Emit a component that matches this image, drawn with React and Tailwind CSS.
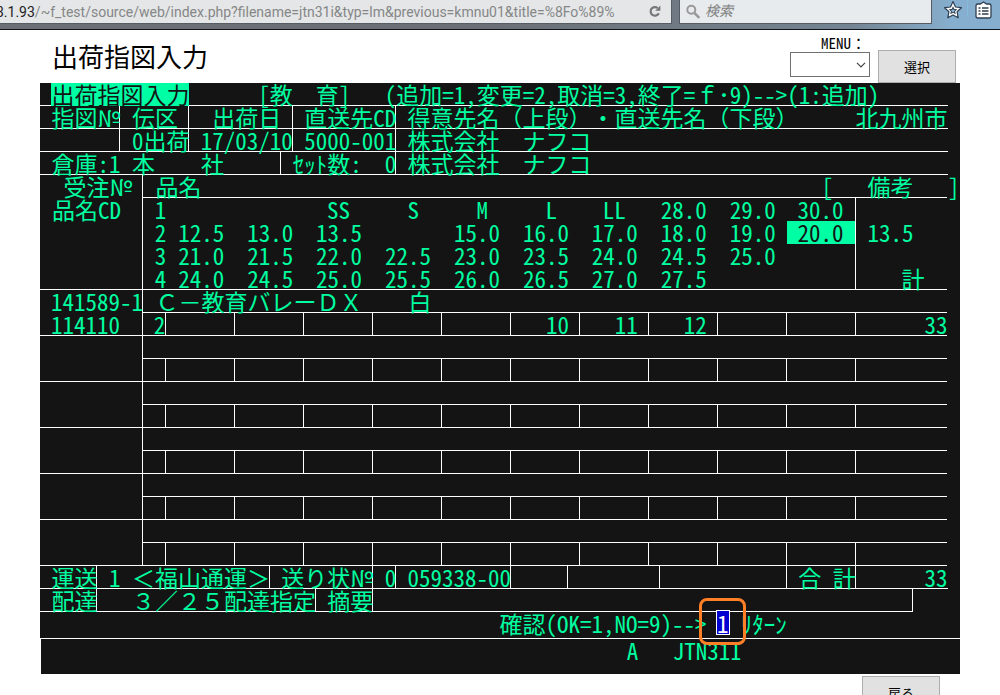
const SIZE_COLUMNS = 10;

const sizeRows = [
  { no: '1', sizes: ['', '', 'SS', 'S', 'M', 'L', 'LL', '28.0', '29.0', '30.0'], note: '' },
  { no: '2', sizes: ['12.5', '13.0', '13.5', '', '15.0', '16.0', '17.0', '18.0', '19.0', '20.0'], note: '13.5', selected: 9 },
  { no: '3', sizes: ['21.0', '21.5', '22.0', '22.5', '23.0', '23.5', '24.0', '24.5', '25.0', ''], note: '' },
  { no: '4', sizes: ['24.0', '24.5', '25.0', '25.5', '26.0', '26.5', '27.0', '27.5', '', ''], note: '計', noteEnd: true },
];

const blankLine = { order: '', code: '', name: '', row: '', qty: ['', '', '', '', '', '', '', '', '', ''], total: '' };

const orderLines = [
  {
    order: '141589-1',
    code: '114110',
    name: 'Ｃ－教育バレーＤＸ　　白',
    row: '2',
    qty: ['', '', '', '', '', '10', '11', '12', '', ''],
    total: '33',
  },
  blankLine,
  blankLine,
  blankLine,
  blankLine,
  blankLine,
];

function Row({ children, lined = true }) {
  return (
    <div className="grid h-[23px] grid-cols-[repeat(80,minmax(0,1fr))]">
      {lined && <div className="col-start-1 col-end-80 row-start-1 border-b border-white" />}
      {children}
    </div>
  );
}

function Cell({ className, children }) {
  return <div className={`row-start-1 whitespace-pre ${className}`}>{children}</div>;
}

function BrowserBar() {
  return (
    <header className="flex h-[30px] shrink-0 items-start border-b border-[#10151b] bg-linear-to-r from-[#6c7076] from-50% via-[#748492] via-85% to-[#86aece] to-95% font-['Roboto','Noto_Sans_CJK_JP',sans-serif]">
      <div className="flex h-6 min-w-0 flex-1 items-center justify-between overflow-hidden border-r border-b border-[#565c63] bg-[#e4e6e8]">
        <span className="-ml-1 text-[14px] leading-6 whitespace-nowrap text-[#868686]">
          <span className="text-[#222]">3.1.93</span>/~f_test/source/web/index.php?filename=jtn31i&amp;typ=lm&amp;previous=kmnu01&amp;title=%8Fo%89%
        </span>
        <button aria-label="再読み込み" className="mr-[10px] shrink-0">
          <svg width="12" height="13" viewBox="0 0 12 13" className="block">
            <path d="M9.8 8.2A4.3 4.3 0 1 1 8.6 3" fill="none" stroke="#777" strokeWidth="2.2" />
            <path d="M11.4 0.6v5.2H6.2z" fill="#777" />
          </svg>
        </button>
      </div>
      <div className="ml-[7px] flex h-6 w-[253px] items-center gap-1 border-r border-b border-l border-[#565c63] bg-[#e7ebee] pl-[5px]">
        <svg width="16" height="16" viewBox="0 0 16 16" className="shrink-0">
          <circle cx="6.3" cy="5.8" r="4" fill="none" stroke="#999" strokeWidth="2" />
          <path d="M9.3 8.8l5 5" stroke="#999" strokeWidth="2.6" />
        </svg>
        <input
          aria-label="検索"
          placeholder="検索"
          className="h-5 w-full min-w-0 bg-transparent text-[14px] italic outline-none placeholder:text-[#808080]"
        />
      </div>
      <button aria-label="ブックマーク" className="ml-3">
        <svg width="18" height="20" viewBox="0 0 18 20" className="block">
          <path d="M9 1.600l2.500 5.400 5.900.7-4.300 4.100 1.100 6L9 14.900l-5.200 2.900 1.100-6L.6 7.700 6.500 7z" fill="#fff" stroke="#2e3f52" strokeWidth="1.200" strokeLinejoin="round" />
          <path d="M9 6.200l1.300 2.700 3 .4-2.200 2 .6 3L9 12.800l-2.700 1.500.6-3-2.200-2 3-.4z" fill="#2e3f52" />
          <path d="M9 8.400l.7 1.500 1.500.2-1.100 1 .3 1.500L9 11.800l-1.400.8.3-1.500-1.100-1 1.500-.2z" fill="#8fb4d2" />
        </svg>
      </button>
      <span className="ml-[5px] h-4 w-px bg-[#84bbdc]" />
      <button aria-label="リスト" className="mr-2 ml-[7px]">
        <svg width="17" height="20" viewBox="0 0 17 20" className="block">
          <path d="M5.500 4L8.500 2l3 2h2.700q1.800 0 1.800 1.800v10.400q0 1.800-1.800 1.800H2.800Q1 18 1 16.200V5.800Q1 4 2.800 4z" fill="#fff" stroke="#2e3f52" strokeWidth="1.300" />
          <path d="M3.500 8h2M7 8h6.500M3.500 11h2M7 11h6.500M3.500 14h2M7 14h6.500" stroke="#2e3f52" strokeWidth="1.600" />
        </svg>
      </button>
    </header>
  );
}

function PageHeader() {
  return (
    <div className="flex h-[53px] shrink-0 items-start justify-between pr-11 pl-[52px]">
      <h1 className="pt-2 text-[26px] leading-9">出荷指図入力</h1>
      <div className="flex items-end gap-2 pt-[5px]">
        <label className="flex flex-col items-end">
          <span className="font-['Noto_Sans_Mono_CJK_JP','Noto_Sans_CJK_JP',monospace] text-[15px] leading-4 pr-1">MENU：</span>
          <span className="relative mt-px mb-[6px] block">
            <select className="block h-[25px] w-20 appearance-none border border-[#707070] bg-white">
              <option></option>
            </select>
            <svg width="10" height="6" viewBox="0 0 10 6" className="pointer-events-none absolute top-[10px] right-1">
              <path d="M1 0.800l4 4 4-4" fill="none" stroke="#444" strokeWidth="1.200" />
            </svg>
          </span>
        </label>
        <button className="h-[33px] w-[78px] border border-[#adadad] bg-[#e1e1e1] text-[13px]">選択</button>
      </div>
    </div>
  );
}

function TopRows() {
  return (
    <>
      <Row>
        <Cell className="col-start-2 col-end-14 bg-[#00ffa5] text-[#141414]">出荷指図入力</Cell>
        <Cell className="col-start-20 col-end-30">[教　育]</Cell>
        <Cell className="col-start-31 col-end-80">(追加=1,変更=2,取消=3,終了=ｆ･9)--&gt;(1:追加)</Cell>
      </Row>
      <Row>
        <Cell className="col-start-2 col-end-8 border-r border-white">指図№</Cell>
        <Cell className="col-start-9 col-end-14 border-r border-white">伝区</Cell>
        <Cell className="col-start-16 col-end-23 border-r border-white">出荷日</Cell>
        <Cell className="col-start-24 col-end-32 border-r border-white">直送先CD</Cell>
        <Cell className="col-start-33 col-end-68">得意先名（上段）・直送先名（下段）</Cell>
        <Cell className="col-start-72 col-end-80">北九州市</Cell>
      </Row>
      <Row>
        <Cell className="col-start-1 col-end-8 border-r border-white" />
        <Cell className="col-start-9 col-end-14 border-r border-white">0出荷</Cell>
        <Cell className="col-start-15 col-end-23 border-r border-white">17/03/10</Cell>
        <Cell className="col-start-24 col-end-32 border-r border-white">5000-001</Cell>
        <Cell className="col-start-33 col-end-80">株式会社　ナフコ</Cell>
      </Row>
      <Row>
        <Cell className="col-start-2 col-end-22 border-r border-white">倉庫:1 本　　社</Cell>
        <Cell className="col-start-23 col-end-32 border-r border-white">ｾｯﾄ数:  0</Cell>
        <Cell className="col-start-33 col-end-80">株式会社　ナフコ</Cell>
      </Row>
    </>
  );
}

function OrderTable() {
  return (
    <table className="w-full table-fixed border-separate border-spacing-0 whitespace-pre [&_td]:align-top [&_th]:align-top">
      <colgroup>
        <col className="w-[11.25%]" />
        <col className="w-[2.5%]" />
        {Array.from({ length: SIZE_COLUMNS }, (_, i) => (
          <col key={i} className="w-[7.5%]" />
        ))}
        <col className="w-[10%]" />
        <col className="w-[1.25%]" />
      </colgroup>
      <thead>
        <tr className="h-[23px]">
          <th className="border-r border-white p-0 pr-[10px] text-right font-normal">受注№</th>
          <th colSpan={12} className="border-b border-white p-0 pl-3 font-normal">
            <div className="-mr-3 flex h-[22px] justify-between">
              <span>品名</span>
              <span>[   備考   ]</span>
            </div>
          </th>
        </tr>
      </thead>
      <tbody>
        {sizeRows.map((r, i) => {
          const line = i === sizeRows.length - 1 ? 'border-b' : '';
          return (
            <tr key={r.no} className="h-[23px]">
              <td className={`border-r border-white p-0 pl-3 ${line}`}>{i === 0 ? '品名CD' : ''}</td>
              <td className={`border-white p-0 text-right ${line}`}>{r.no}</td>
              {r.sizes.map((s, j) => (
                <td
                  key={j}
                  className={`border-white p-0 text-right ${line} ${/\d/.test(s) ? 'pr-[11px]' : 'pr-[23px]'} ${
                    j === SIZE_COLUMNS - 1 ? 'border-r' : ''
                  } ${r.selected === j ? 'bg-[#00ffa5] text-[#141414]' : ''}`}
                >
                  {s}
                </td>
              ))}
              <td className={`border-white p-0 ${line} ${r.noteEnd ? 'pr-[23px] text-right' : 'pl-3'}`}>{r.note}</td>
            </tr>
          );
        })}
      </tbody>
      {orderLines.map((l, i) => (
        <tbody key={i}>
          <tr className="h-[23px]">
            <td className="border-r border-white p-0 pl-[11px]">{l.order}</td>
            <td colSpan={12} className="border-b border-white p-0 pl-3">{l.name}</td>
          </tr>
          <tr className="h-[23px]">
            <td className="border-r border-b border-white p-0 pl-[11px]">{l.code}</td>
            <td className="border-r border-b border-white p-0 text-right">{l.row}</td>
            {l.qty.map((q, j) => (
              <td key={j} className="border-r border-b border-white p-0 pr-[10px] text-right">{q}</td>
            ))}
            <td className="border-b border-white p-0 text-right">{l.total}</td>
          </tr>
        </tbody>
      ))}
    </table>
  );
}

function BottomRows() {
  return (
    <>
      <Row>
        <Cell className="col-start-2 col-end-6 border-r border-white">運送</Cell>
        <Cell className="col-start-7 col-end-21 border-r border-white">1 ＜福山通運＞</Cell>
        <Cell className="col-start-22 col-end-30 border-r border-white">送り状№</Cell>
        <Cell className="col-start-31 col-end-32 border-r border-white">0</Cell>
        <Cell className="col-start-33 col-end-42 border-r border-white">059338-00</Cell>
        <Cell className="col-start-42 col-end-47 border-r border-white" />
        <Cell className="col-start-47 col-end-55 border-r border-white" />
        <Cell className="col-start-55 col-end-66 border-r border-white" />
        <Cell className="col-start-67 col-end-72 border-r border-white">合 計</Cell>
        <Cell className="col-start-72 col-end-80 text-right">33</Cell>
      </Row>
      <Row lined={false}>
        <Cell className="col-start-1 col-end-77 border-r border-b border-white" />
        <Cell className="col-start-2 col-end-6 border-r border-white">配達</Cell>
        <Cell className="col-start-9 col-end-25 border-r border-white">３／２５配達指定</Cell>
        <Cell className="col-start-26 col-end-30 border-r border-white">摘要</Cell>
      </Row>
      <Row lined={false}>
        <Cell className="col-start-41 col-end-59">
          <label htmlFor="confirm">確認(OK=1,NO=9)--&gt;</label>
        </Cell>
        <div className="relative col-start-60 col-end-62 row-start-1">
          <input
            id="confirm"
            defaultValue="1"
            className="absolute -top-[2px] -left-[2px] block h-[25px] w-[14px] border border-white bg-[#0000d0] text-center text-white outline-none"
          />
          <div className="pointer-events-none absolute -top-[14px] -left-[19px] h-[47px] w-[47px] rounded-[8px] border-[3px] border-[#ff7f27]" />
        </div>
        <Cell className="col-start-62 col-end-80">ﾘﾀｰﾝ</Cell>
      </Row>
    </>
  );
}

export default function App() {
  return (
    <div className="flex h-screen flex-col overflow-hidden bg-white font-['Noto_Sans_CJK_JP',sans-serif] text-black">
      <BrowserBar />
      <PageHeader />
      <main className="mx-10 shrink-0 bg-[#141414] font-['Noto_Sans_Mono_CJK_JP','Noto_Sans_CJK_JP',monospace] text-[23px] leading-[22px] text-[#00ffa0] [text-spacing-trim:space-all]">
        <div className="pr-px">
          <TopRows />
          <OrderTable />
          <BottomRows />
        </div>
        <footer className="mt-[3px] h-9 border-t border-l border-white">
          <Row lined={false}>
            <Cell className="col-start-52 col-end-80">A   JTN31I</Cell>
          </Row>
        </footer>
      </main>
      <div className="flex shrink-0 justify-end pt-[2px] pr-[60px]">
        <button className="h-[33px] w-[78px] border border-[#adadad] bg-[#e1e1e1] text-[13px]">戻る</button>
      </div>
    </div>
  );
}
